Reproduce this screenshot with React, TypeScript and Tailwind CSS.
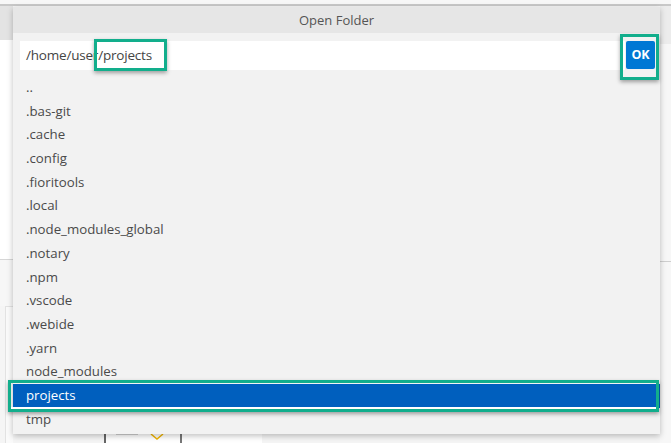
import React from 'react'

const folders = [
  '..',
  '.bas-git',
  '.cache',
  '.config',
  '.fioritools',
  '.local',
  '.node_modules_global',
  '.notary',
  '.npm',
  '.vscode',
  '.webide',
  '.yarn',
  'node_modules',
  'projects',
  'tmp',
]

function Backdrop() {
  return (
    <div className="absolute inset-0 flex flex-col bg-[#f5f5f5]">
      <div className="h-[6px] bg-[#f7f7f7] border-b-2 border-[#c8c8c8]" />
      <div className="flex flex-1">
        {/* left strip under the dialog */}
        <div className="w-[13px] flex flex-col">
          <div className="h-[34px] bg-[#e3e3e3]" />
          <div className="h-[220px] bg-white border-b border-[#d6d6d6]" />
          <div className="h-[46px] bg-[#f7f7f7]" />
          <div className="flex-1 ml-[5px] bg-[#fafafa] border-l border-t border-[#e2e2e2]" />
        </div>
        <div className="flex-1 flex flex-col justify-end">
          <div className="h-[10px] flex">
            <div className="w-[91px]" />
            <div className="w-[2px] bg-[#666]" />
            <div className="w-[74px] bg-white flex">
              <div className="w-[22px] ml-[10px] h-[2px] bg-[#d0d0d0]" />
              <svg width="14" height="8" viewBox="0 0 14 8" className="ml-[12px]">
                <path d="M1 1 L7 6 L13 1" fill="none" stroke="#f0b400" strokeWidth="1.5" />
              </svg>
            </div>
            <div className="w-[2px] bg-[#777]" />
            <div className="w-[80px] bg-white" />
          </div>
        </div>
        {/* right strip */}
        <div className="w-[11px] flex flex-col">
          <div className="h-[38px] bg-[#ececec]" />
          <div className="h-[218px] bg-[#f7f7f7] border-b border-[#cfcfcf]" />
          <div className="flex-1 bg-[#f7f7f7]" />
        </div>
      </div>
    </div>
  )
}

export default function App() {
  return (
    <div
      className="relative w-[671px] h-[443px] overflow-hidden"
      style={{ fontFamily: '"Open Sans", "Noto Sans", sans-serif' }}
    >
      <Backdrop />

      {/* dialog */}
      <div className="absolute left-[13px] top-[7px] w-[647px] h-[427px] bg-[#f2f2f2] shadow-[0_2px_6px_rgba(0,0,0,0.25)] flex flex-col">
        <div className="h-[26px] bg-[#e6e6e6] text-center text-[13px] leading-[26px] text-[#555]">
          Open Folder
        </div>
        <div className="flex mt-[8px] pl-[7px] pr-[5px] gap-[1px]">
          <div className="flex-1 h-[29px] bg-white text-[13.5px] leading-[29px] pl-[6px] text-[#444] tracking-[-0.2px]">
            /home/user/projects
          </div>
          <div className="w-[29px] h-[28px] bg-[#0078d4] rounded-[2px] text-white text-[12.5px] font-bold leading-[28px] text-center">
            OK
          </div>
        </div>
        <div className="mt-[6px] flex flex-col">
          {folders.map((f) => (
            <div
              key={f}
              className={
                f === 'projects'
                  ? 'h-[23.7px] pl-[13px] text-[13.25px] leading-[23.7px] bg-[#005fbe] text-white'
                  : 'h-[23.7px] pl-[13px] text-[13.25px] leading-[23.7px] text-[#4a4a4a]'
              }
            >
              {f}
            </div>
          ))}
        </div>
      </div>

      {/* highlight markers */}
      <div className="absolute left-[94px] top-[39px] w-[73px] h-[32px] border-[3px] border-[#12ae8c] shadow-[0_2px_4px_rgba(0,0,0,0.35)]" />
      <div className="absolute left-[620px] top-[34px] w-[39px] h-[46px] border-[3px] border-[#12ae8c] shadow-[0_2px_4px_rgba(0,0,0,0.35)]" />
      <div className="absolute left-[8px] top-[380px] w-[651px] h-[32px] border-[3px] border-[#12ae8c] shadow-[0_2px_4px_rgba(0,0,0,0.35)]">
        <div className="absolute left-0 right-0 bottom-0 h-[2px] bg-white" />
      </div>
    </div>
  )
}
